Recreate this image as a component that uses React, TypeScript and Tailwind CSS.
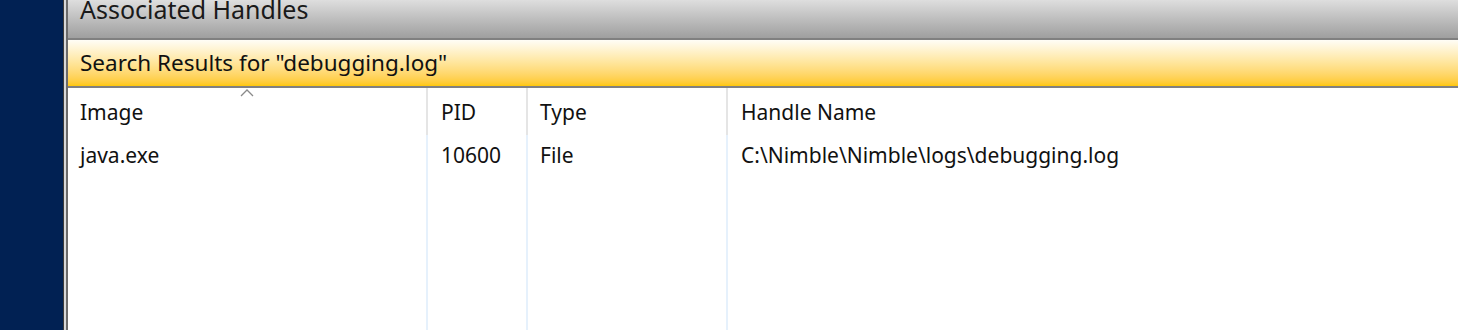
import React from "react";

const font = { fontFamily: '"Noto Sans", "Open Sans", sans-serif' };

export default function App() {
  return (
    <div className="flex w-[1458px] h-[330px] overflow-hidden bg-white text-[#111]" style={font}>
      <div className="w-[63px] bg-[#012153]" />
      <div className="w-px bg-[#3a3a3a]" />
      <div className="w-[2px] bg-[#d8d8d8]" />
      <div className="w-[2px] bg-[#6a6a6a]" />
      <div className="flex-1 flex flex-col">
        <div className="h-[38px] bg-gradient-to-b from-[#dedede] to-[#9f9f9f] flex items-start pl-[12px] overflow-hidden">
          <span className="text-[25px] leading-[26px] -mt-[4px] text-[#1a1a1a] whitespace-nowrap">Associated Handles</span>
        </div>
        <div className="h-[2px] bg-[#808080]" />
        <div className="h-[46px] bg-gradient-to-b from-[#fffdf6] via-[#ffe59a] to-[#ffc700] flex items-center pl-[12px]">
          <span className="text-[22.5px] leading-[26px] text-[#111] whitespace-nowrap">Search Results for "debugging.log"</span>
        </div>
        <div className="h-[2px] bg-[#808080]" />
        <div className="flex-1 flex text-[21px] leading-[24px]">
          <div className="w-[358px] flex flex-col">
            <div className="relative h-[47px] flex items-center pl-[12px]">
              <svg className="absolute left-[172px] top-[1px]" width="14" height="8" viewBox="0 0 14 8">
                <polyline points="1,7 7,1 13,7" fill="none" stroke="#8a8a8a" strokeWidth="1.3" />
              </svg>
              Image
            </div>
            <div className="h-[40px] flex items-center pl-[12px]">java.exe</div>
          </div>
          <div className="w-[100px] flex flex-col">
            <div className="h-[47px] flex items-center pl-[13px] border-l-2 border-[#e5e5e5]">PID</div>
            <div className="flex-1 border-l-2 border-[#e6f1fc]">
              <div className="h-[40px] flex items-center pl-[13px]">10600</div>
            </div>
          </div>
          <div className="w-[200px] flex flex-col">
            <div className="h-[47px] flex items-center pl-[12px] border-l-2 border-[#e5e5e5]">Type</div>
            <div className="flex-1 border-l-2 border-[#e6f1fc]">
              <div className="h-[40px] flex items-center pl-[12px]">File</div>
            </div>
          </div>
          <div className="flex-1 flex flex-col">
            <div className="h-[47px] flex items-center pl-[13px] border-l-2 border-[#e5e5e5]">Handle Name</div>
            <div className="flex-1 border-l-2 border-[#e6f1fc]">
              <div className="h-[40px] flex items-center pl-[13px]">C:\Nimble\Nimble\logs\debugging.log</div>
            </div>
          </div>
        </div>
      </div>
    </div>
  );
}
